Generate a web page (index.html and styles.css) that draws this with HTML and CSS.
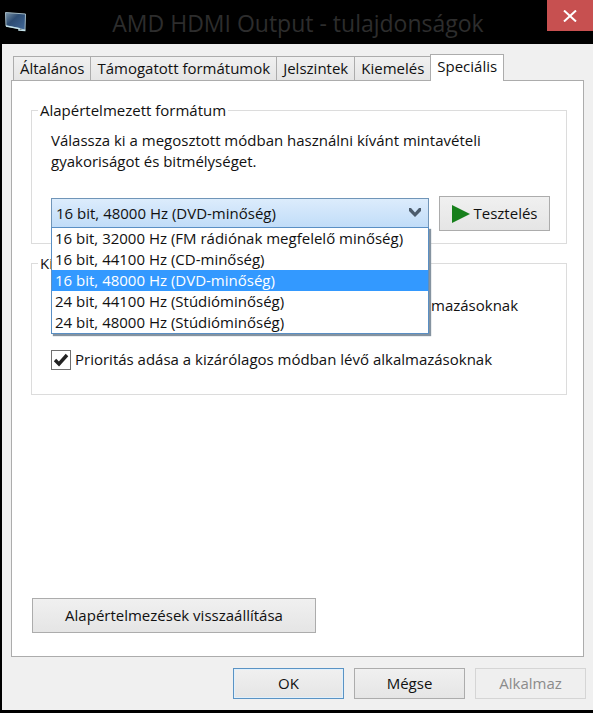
FILE: index.html
```
<!DOCTYPE html>
<html lang="hu">
<head>
    <meta charset="UTF-8">
    <meta name="viewport" content="width=device-width, initial-scale=1.0">
    <title>AMD HDMI Output - tulajdonságok</title>
    <link rel="stylesheet" href="styles.css">
</head>
<body>
    <div class="window">
        <header class="titlebar">
            <svg class="device-icon" width="22" height="20" viewBox="0 0 22 20" aria-hidden="true">
                <defs>
                    <linearGradient id="screen" x1="0" y1="0" x2="1" y2="1">
                        <stop offset="0" stop-color="#7c95a8"/>
                        <stop offset="0.4" stop-color="#2d4c72"/>
                        <stop offset="1" stop-color="#42699a"/>
                    </linearGradient>
                </defs>
                <path d="M0.5 0.5L20.5 2L20 18L14 16.5L1 14Z" fill="url(#screen)" stroke="#a3b9c4"/>
                <path d="M1 14L14 16.5L14 18L20.5 18.5" fill="none" stroke="#c3e0e8" stroke-width="1.5"/>
            </svg>
            <h1>AMD HDMI Output - tulajdonságok</h1>
            <button type="button" class="close" aria-label="Bezárás">
                <svg width="14" height="12" viewBox="0 0 14 12" aria-hidden="true">
                    <path d="M1 0.5L13 11.5M13 0.5L1 11.5" stroke="#fff" stroke-width="2"/>
                </svg>
            </button>
        </header>

        <main class="content">
            <div class="tabs" role="tablist">
                <button type="button" class="tab" role="tab">Általános</button>
                <button type="button" class="tab" role="tab">Támogatott formátumok</button>
                <button type="button" class="tab" role="tab">Jelszintek</button>
                <button type="button" class="tab" role="tab">Kiemelés</button>
                <button type="button" class="tab active" role="tab" aria-selected="true">Speciális</button>
            </div>

            <div class="panel" role="tabpanel">
                <fieldset class="group">
                    <legend>Alapértelmezett formátum</legend>
                    <label class="description" for="format">Válassza ki a megosztott módban használni kívánt mintavételi gyakoriságot és bitmélységet.</label>
                    <div class="format-row">
                        <div class="combo">
                            <select id="format">
                                <option>16 bit, 32000 Hz (FM rádiónak megfelelő minőség)</option>
                                <option>16 bit, 44100 Hz (CD-minőség)</option>
                                <option selected>16 bit, 48000 Hz (DVD-minőség)</option>
                                <option>24 bit, 44100 Hz (Stúdióminőség)</option>
                                <option>24 bit, 48000 Hz (Stúdióminőség)</option>
                            </select>
                            <svg class="arrow" width="12" height="9" viewBox="0 0 12 9" aria-hidden="true">
                                <path d="M0 0H2L6 4.5L10 0H12V3L6 9L0 3Z" fill="#4c5c6c"/>
                            </svg>
                            <ul class="options" role="listbox">
                                <li role="option">16 bit, 32000 Hz (FM rádiónak megfelelő minőség)</li>
                                <li role="option">16 bit, 44100 Hz (CD-minőség)</li>
                                <li role="option" class="selected" aria-selected="true">16 bit, 48000 Hz (DVD-minőség)</li>
                                <li role="option">24 bit, 44100 Hz (Stúdióminőség)</li>
                                <li role="option">24 bit, 48000 Hz (Stúdióminőség)</li>
                            </ul>
                        </div>
                        <button type="button" class="btn test">
                            <svg width="18" height="18" viewBox="0 0 18 18" aria-hidden="true">
                                <path d="M0 0L18 9L0 18Z" fill="#17801c"/>
                            </svg>
                            Tesztelés
                        </button>
                    </div>
                </fieldset>

                <fieldset class="group exclusive">
                    <legend>Kizárólagos mód</legend>
                    <label class="check">
                        <input type="checkbox" checked>
                        Az eszközei kizárólagos elérésének átadása az alkalmazásoknak
                    </label>
                    <label class="check">
                        <input type="checkbox" checked>
                        Prioritás adása a kizárólagos módban lévő alkalmazásoknak
                    </label>
                </fieldset>

                <button type="button" class="btn reset">Alapértelmezések visszaállítása</button>
            </div>
        </main>

        <footer class="actions">
            <button type="button" class="btn default">OK</button>
            <button type="button" class="btn">Mégse</button>
            <button type="button" class="btn" disabled>Alkalmaz</button>
        </footer>
    </div>
</body>
</html>
```
FILE: styles.css
```
* {
    box-sizing: border-box;
}
body {
    margin: 0;
    background-color: #000;
    color: #111;
    font-family: "Open Sans", "Noto Sans", sans-serif;
    font-size: 15px;
    line-height: 21px;
}
button, select, input {
    font: inherit;
    color: inherit;
    margin: 0;
}
.window {
    display: flex;
    flex-direction: column;
    min-height: 100vh;
    padding: 0 0 3px 2px;
    background-color: #000;
}

/* title bar */
.titlebar {
    display: flex;
    align-items: flex-start;
    height: 44px;
}
.device-icon {
    margin: 12px 0 0 3px;
}
.titlebar h1 {
    flex: 1;
    margin: 0;
    padding-left: 22px;
    color: #2d2d2d;
    font-size: 23px;
    font-weight: normal;
    line-height: 46px;
    text-align: center;
    white-space: nowrap;
}
.close {
    display: flex;
    align-items: center;
    justify-content: center;
    width: 46px;
    height: 31px;
    padding: 0;
    border: none;
    background-color: #c75050;
}

/* tabs */
.content {
    display: flex;
    flex: 1;
    flex-direction: column;
    padding: 10px 9px 0;
    background-color: #f0f0f0;
}
.tabs {
    display: flex;
    align-items: flex-end;
    padding-left: 2px;
}
.tab {
    height: 24px;
    padding: 0 6px;
    border: 1px solid #acacac;
    border-right: none;
    border-bottom: none;
    background: linear-gradient(#f0f0f0, #e5e5e5);
    line-height: 23px;
    white-space: nowrap;
}
.tab.active {
    z-index: 1;
    height: 27px;
    margin-bottom: -1px;
    padding-bottom: 3px;
    border-right: 1px solid #acacac;
    background: #fff;
}
.panel {
    display: flex;
    flex: 1;
    flex-direction: column;
    padding: 19px 16px 23px 20px;
    border: 1px solid #acacac;
    background-color: #fff;
}

/* groups */
.group {
    min-width: 0;
    margin: 0 0 9px -1px;
    padding: 9px 16px 12px 19px;
    border: 1px solid #dcdcdc;
}
.group legend {
    margin-left: -13px;
    padding: 0 2px;
}
.description {
    display: block;
    max-width: 450px;
}
.format-row {
    display: flex;
    align-items: center;
    gap: 10px;
    margin-top: 24px;
}
.combo {
    position: relative;
    flex: 1;
}
.combo select {
    display: block;
    width: 100%;
    height: 31px;
    padding: 0 24px 0 4px;
    border: 1px solid #7095b8;
    border-radius: 0;
    appearance: none;
    background: linear-gradient(#dcecfc, #c0dcf8);
}
.arrow {
    position: absolute;
    top: 10px;
    right: 8px;
    pointer-events: none;
}
.options {
    position: absolute;
    top: 100%;
    left: 0;
    right: 0;
    z-index: 2;
    margin: -2px 0 0;
    padding: 0;
    border: 1px solid #5a8fc4;
    background-color: #fff;
    box-shadow: 2px 2px 1px #8593a0;
    list-style: none;
}
.options li {
    padding-left: 3px;
    white-space: nowrap;
}
.options .selected {
    background-color: #3399ff;
    color: #fff;
}
.exclusive {
    display: flex;
    flex-direction: column;
    gap: 33px;
    padding-top: 21px;
    padding-bottom: 24px;
}
.check {
    display: flex;
    align-items: center;
    gap: 4px;
    white-space: nowrap;
}
.check input {
    flex: none;
    width: 20px;
    height: 20px;
    border: 1px solid #707070;
    appearance: none;
    background-color: #fff;
}
.check input:checked {
    background-image: url("data:image/svg+xml,%3Csvg xmlns='http://www.w3.org/2000/svg' viewBox='0 0 18 18'%3E%3Cpath d='M3 9L7 13L15 4' fill='none' stroke='%23222' stroke-width='3.4'/%3E%3C/svg%3E");
}

/* buttons */
.btn {
    width: 111px;
    height: 31px;
    padding: 0;
    border: 1px solid #acacac;
    background: linear-gradient(#f0f0f0, #e5e5e5);
    white-space: nowrap;
}
.btn:disabled {
    border-color: #d5d5d5;
    background: #efefef;
    color: #8b8b8b;
}
.btn.default {
    border-color: #5a93c4;
    box-shadow: inset 0 0 0 1px #e0f0fc;
}
.btn.test {
    display: flex;
    align-items: center;
    justify-content: center;
    gap: 4px;
    height: 35px;
}
.btn.reset {
    width: 284px;
    height: 35px;
    margin-top: auto;
}
.actions {
    display: flex;
    justify-content: flex-end;
    gap: 10px;
    padding: 11px 7px;
    background-color: #f0f0f0;
}
```
